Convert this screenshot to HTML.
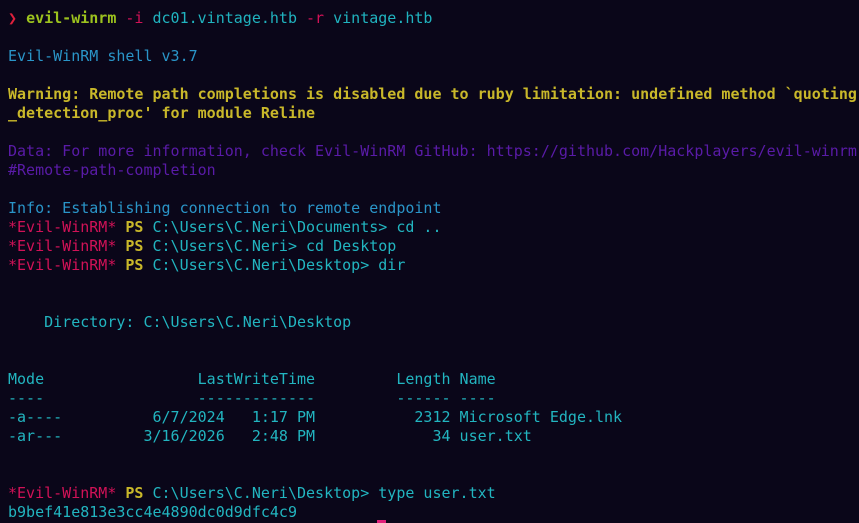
<!DOCTYPE html>
<html><head><meta charset="utf-8"><style>
html,body{margin:0;padding:0;background:#0a0619;width:859px;height:523px;overflow:hidden}
pre{margin:0;padding:9px 0 0 8px;font-family:"DejaVu Sans Mono","Liberation Mono",monospace;font-size:15px;line-height:19px;color:#22b5c0;white-space:pre}
.r{color:#e0203c}.g{color:#9cc21e;font-weight:bold}.p{color:#d11257}.c{color:#20b3bf}
.b{color:#2a95c8}.y{color:#c9b82a;font-weight:bold}.v{color:#5a1ba8}.k{color:#c9b82a;font-weight:bold}
.cur{position:absolute;left:377px;top:520px;width:9px;height:3px;background:#e0207a}
</style></head><body><pre><span class="r">❯</span> <span class="g">evil-winrm</span> <span class="p">-i</span> <span class="c">dc01.vintage.htb</span> <span class="p">-r</span> <span class="c">vintage.htb</span>

<span class="b">Evil-WinRM shell v3.7</span>

<span class="y">Warning: Remote path completions is disabled due to ruby limitation: undefined method `quoting
_detection_proc' for module Reline</span>

<span class="v">Data: For more information, check Evil-WinRM GitHub: https://github.com/Hackplayers/evil-winrm
#Remote-path-completion</span>

<span class="b">Info: Establishing connection to remote endpoint</span>
<span class="p">*Evil-WinRM*</span> <span class="k">PS</span> C:\Users\C.Neri\Documents&gt; cd ..
<span class="p">*Evil-WinRM*</span> <span class="k">PS</span> C:\Users\C.Neri&gt; cd Desktop
<span class="p">*Evil-WinRM*</span> <span class="k">PS</span> C:\Users\C.Neri\Desktop&gt; dir


    Directory: C:\Users\C.Neri\Desktop


Mode                 LastWriteTime         Length Name
----                 -------------         ------ ----
-a----          6/7/2024   1:17 PM           2312 Microsoft Edge.lnk
-ar---         3/16/2026   2:48 PM             34 user.txt


<span class="p">*Evil-WinRM*</span> <span class="k">PS</span> C:\Users\C.Neri\Desktop&gt; type user.txt
b9bef41e813e3cc4e4890dc0d9dfc4c9</pre><div class="cur"></div></body></html>
